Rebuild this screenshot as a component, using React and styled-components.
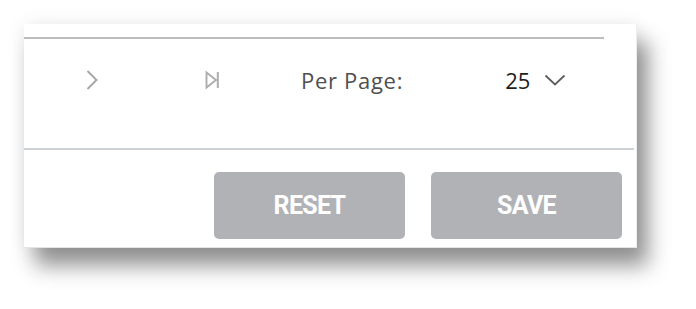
import React, { useState } from "react";
import styled, { createGlobalStyle } from "styled-components";

const GlobalStyle = createGlobalStyle`
    html, body {
        margin: 0;
        padding: 0;
        background: #fff;
    }
    body {
        font-family: "Open Sans", "Noto Sans", sans-serif;
    }
`;

function ChevronRight() {
    return (
        <svg width="14" height="22" viewBox="0 0 14 22" fill="none">
            <path d="M2.5 2l9 9-9 9" stroke="#a6a6a6" strokeWidth="1.9" />
        </svg>
    );
}

function LastPage() {
    return (
        <svg width="17" height="20" viewBox="0 0 17 20" fill="none">
            <path d="M2.5 2.5l9.5 7.5-9.5 7.5z" stroke="#adadad" strokeWidth="1.9" />
            <path d="M13.8 2v16" stroke="#adadad" strokeWidth="2" />
        </svg>
    );
}

function ChevronDown() {
    return (
        <svg width="22" height="12" viewBox="0 0 22 12" fill="none">
            <path d="M1.5 1.5l9.5 9 9.5-9" stroke="#5e5e5e" strokeWidth="1.8" />
        </svg>
    );
}

function App() {
    const [perPage] = useState(25);

    return (
        <>
            <GlobalStyle />
            <Page>
                <Panel>
                    <TopRule />
                    <Pager>
                        <IconButton $left={61}>
                            <ChevronRight />
                        </IconButton>
                        <IconButton $left={105}>
                            <LastPage />
                        </IconButton>
                        <PerPageLabel>Per Page:</PerPageLabel>
                        <PerPageSelect>
                            <span>{perPage}</span>
                            <ChevronDown />
                        </PerPageSelect>
                    </Pager>
                    <Footer>
                        <ActionButton type="button">RESET</ActionButton>
                        <ActionButton type="button">SAVE</ActionButton>
                    </Footer>
                </Panel>
            </Page>
        </>
    );
}

const Page = styled.div`
    min-height: 309px;
    box-sizing: border-box;
    padding: 24px 0 0 24px;
`;
const Panel = styled.div`
    width: 613px;
    height: 224px;
    box-sizing: border-box;
    padding-top: 13px;
    background: #fff;
    border-right: 1px solid #eeeeee;
    border-bottom: 1px solid #e4e4e4;
    box-shadow: 11px 18px 20px rgba(0, 0, 0, 0.42), 0 0 18px rgba(0, 0, 0, 0.08);
    display: flex;
    flex-direction: column;
`;
const TopRule = styled.div`
    height: 0;
    margin-right: 32px;
    border-top: 2px solid #bdbdbd;
`;
const Pager = styled.div`
    display: flex;
    align-items: center;
    height: 82px;
    padding-bottom: 27px;
    border-bottom: 2px solid #ccd1d6;
    margin-right: 2px;
`;
const IconButton = styled.div`
    display: flex;
    align-items: center;
    margin-left: ${(p) => p.$left}px;
    & > svg {
        display: block;
    }
`;
const PerPageLabel = styled.span`
    margin-left: 80px;
    font-size: 22px;
    color: #4f4f4f;
    letter-spacing: 0.7px;
`;
const PerPageSelect = styled.div`
    display: flex;
    align-items: center;
    gap: 14px;
    margin-left: 102px;
    font-size: 22px;
    color: #1e1e1e;
`;
const Footer = styled.div`
    display: flex;
    justify-content: flex-end;
    gap: 26px;
    padding: 22px 14px 0 0;
`;
const ActionButton = styled.button`
    width: 191px;
    height: 67px;
    border: 0;
    border-radius: 5px;
    background: #b1b2b6;
    color: #fff;
    font-family: Roboto, "Liberation Sans", sans-serif;
    font-weight: 700;
    font-size: 25px;
    letter-spacing: -0.7px;
    cursor: pointer;
    padding: 0;
`;

export default App;
